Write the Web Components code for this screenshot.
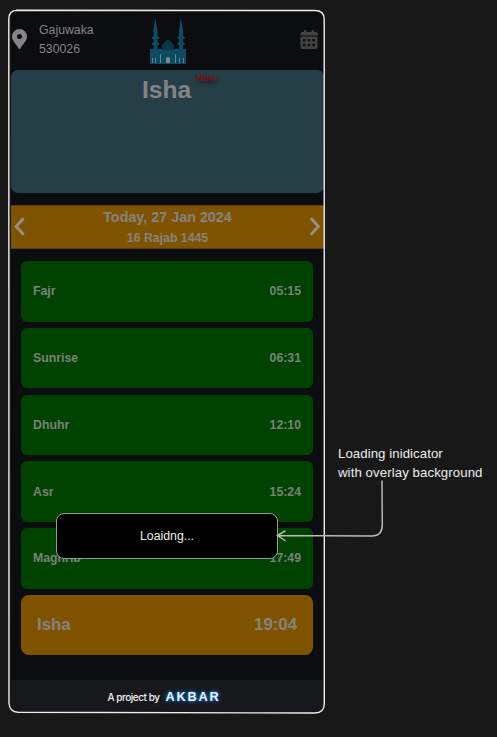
<!DOCTYPE html>
<html lang="en"><head><meta charset="utf-8"><title>Prayer times</title>
<style>html,body{margin:0;background:#181818;height:100%;overflow:hidden}body{font-family:"Liberation Sans",Arial,sans-serif}</style></head>
<body><prayer-board></prayer-board>
<script>
const define=(name,html)=>customElements.define(name,class extends HTMLElement{
 constructor(){super();const t=document.createElement('template');t.innerHTML=html;this.attachShadow({mode:'open'}).append(t.content.cloneNode(true));}
});
define('app-header',`<style>
:host{display:grid;grid-template-columns:27px 1fr 18px;height:60px;box-sizing:border-box;padding:0 6px 0 1px;align-items:center;color:#858586;font-size:12.3px;line-height:19px}
.pin{width:15px;height:20px;margin-top:-2px}.place{display:grid;grid-template-columns:111px 1fr;align-items:center}
.mosque{width:36px;height:46px;margin-top:1px}.cal{width:18px;height:19px;margin-top:-2px}svg{display:block}</style>
<svg class="pin" viewBox="0 0 384 512" fill="#858586"><path d="M172 502C27 291 0 270 0 192a192 192 0 1 1 384 0c0 78-27 99-172 310a24 24 0 0 1-40 0zM192 256a64 64 0 1 0 0-128 64 64 0 0 0 0 128z"/></svg>
<div class="place"><div>Gajuwaka<br>530026</div>
<svg class="mosque" viewBox="0 0 36 46" fill="#0c4c61"><path d="M5.200 0L3.500 12v6L2 19v2h1.500v3L2 25v2h1.500v4h4v-4H9v-2l-1.500-1v-3H9v-2l-1.500-1v-6zM30.800 0L29 12v6l-1.500 1v2H29v3l-1.500 1v2H29v4h4v-4h1.500v-2L33 24v-3h1.500v-2L33 18v-6z"/><path fill="#08374a" d="M12 31c-1-5 3-7 6-10 3 3 7 5 6 10z"/><path d="M0 31h36v15H0z"/><path fill="#08374a" d="M12 30h12v2H12z"/><path fill="#65858e" d="M2 40h1v5H2zm3 0h1v5H5zm5-4h1v9h-1zm15 0h1v9h-1zm4 4h1v5h-1zm4 0h1v5h-1z"/><path fill="#858585" d="M16 45v-5q2-2 4 0v5z"/></svg></div>
<svg class="cal" viewBox="0 0 18 19"><path fill="#424243" d="M2 2h2V.5q0-.5.500-.5H6q.5 0 .5.500V2h5V.5q0-.5.500-.5h1.500q.5 0 .5.500V2h2q2 0 2 2v1.500H.5V4q0-2 1.500-2zM.5 6.500h17V17q0 2-2 2h-13q-2 0-2-2z"/><path fill="#0b0d10" d="M3 9h2.500v2.500H3zm4.700 0h2.500v2.500H7.700zm4.700 0h2.500v2.500h-2.500zM3 13.700h2.500v2.500H3zm4.700 0h2.500v2.500H7.700zm4.700 0h2.500v2.500h-2.500z"/></svg>`);
define('now-card',`<style>:host{display:block;height:123px;border-radius:7px;background:#263f47;color:#828485;text-align:center;font:bold 24.6px/40px "Liberation Sans",Arial,sans-serif;box-sizing:border-box;padding-right:2px}
.t{position:relative;display:inline-block}.n{position:absolute;left:54px;top:2px;font-size:9.200px;line-height:12px;letter-spacing:.2px;color:#850e13;text-shadow:1px 2px 4px #111}</style><span class="t">Isha<span class="n">Now</span></span>`);
define('date-bar',`<style>:host{display:grid;grid-template-columns:20px 1fr 20px;align-items:center;box-sizing:border-box;height:44px;margin-top:12px;background:#805300;color:#858380;border-block:1px solid #5b3e09;font-weight:bold;text-align:center}
.a{font-size:14.350px;line-height:22px}.b{font-size:12.300px;line-height:20px}svg{width:20px;height:22px;margin-top:-2px;fill:none;stroke:#969086;stroke-width:2.800;stroke-linecap:round;stroke-linejoin:round}</style>
<svg viewBox="0 0 20 22"><path d="M12 4L5 11.500l7 7.300"/></svg><div><div class="a">Today, 27 Jan 2024</div><div class="b">16 Rajab 1445</div></div><svg viewBox="0 0 20 22"><path d="M7.500 4l7 7.500-7 7.300"/></svg>`);
define('prayer-row',`<style>:host{display:flex;justify-content:space-between;align-items:center;box-sizing:border-box;height:60.500px;padding:0 12px;border-radius:6px;background:#004200;color:#788278;font-size:12.300px;font-weight:bold}
:host([current]){background:#805300;color:#858380;border-radius:8px;font-size:16.800px;padding:0 16px}</style><slot name="name"></slot><slot name="time"></slot>`);
define('prayer-list',`<style>:host{display:flex;flex-direction:column;gap:6.300px;padding:12px 11px 0 10px}</style><slot></slot>`);
define('app-footer',`<style>:host{display:flex;align-items:center;justify-content:center;gap:6px;margin-top:auto;height:32px;background:#17181b;border-radius:0 0 8px 8px;color:#f2f2f2;font:500 10px Inter,sans-serif;letter-spacing:-.46px;box-sizing:border-box;padding-right:7px}
b{font:bold 12.700px "Liberation Sans",Arial,sans-serif;letter-spacing:1.850px;text-shadow:0 0 3px #087be0,0 0 5px #087be0}span,b{position:relative;top:1px}</style><span>A project by</span><b>AKBAR</b>`);
define('loading-dialog',`<style>:host{display:flex;align-items:center;justify-content:center;box-sizing:border-box;width:222px;height:46px;border:1px solid #929b92;border-radius:8px;background:#000;color:#eee;font-size:12.300px}</style><slot></slot>`);
define('callout-note',`<style>:host{display:block;color:#eee;font-size:13.200px;line-height:18.500px;white-space:nowrap}.one{letter-spacing:.08px}.two{letter-spacing:.1px}</style><div class="one">Loading inidicator</div><div class="two">with overlay background</div>`);
define('prayer-board',`<style>
:host{display:block;position:relative;width:497px;height:737px;background:#181818;overflow:hidden}
main{display:flex;flex-direction:column;box-sizing:border-box;width:313px;height:702px;margin-left:11px;background:#0b0d10;border-radius:7px}
.wrap{padding-top:10px}
loading-dialog{position:absolute;left:56px;top:513px}callout-note{position:absolute;left:338px;top:445px}
.ink{position:absolute;inset:0;fill:none;stroke-linecap:round}</style>
<div class="wrap"><main><app-header></app-header><now-card></now-card><date-bar></date-bar><prayer-list>
${[['Fajr','05:15'],['Sunrise','06:31'],['Dhuhr','12:10'],['Asr','15:24'],['Maghrib','17:49'],['Isha','19:04']].map(([n,t],i)=>`<prayer-row${i===5?' current':''}><span slot="name">${n}</span><span slot="time">${t}</span></prayer-row>`).join('')}
</prayer-list><app-footer></app-footer></main></div>
<loading-dialog>Loaidng...</loading-dialog><callout-note></callout-note>
<svg class="ink" width="497" height="737"><path stroke="#eee" stroke-width="1.400" d="M17 10.300L315 10.500Q324 10.500 324.200 19L324.300 704Q324 713 315 713L18 712.300Q9.500 712 9 703L8.800 19Q9 10.500 17 10.300z"/>
<path stroke="#b9b9b9" stroke-width="1.500" d="M382 481L382.300 525Q382.300 536 372 536L278 535.500M285 531L277.500 535.500L285 540.500"/></svg>`);
</script></body></html>
